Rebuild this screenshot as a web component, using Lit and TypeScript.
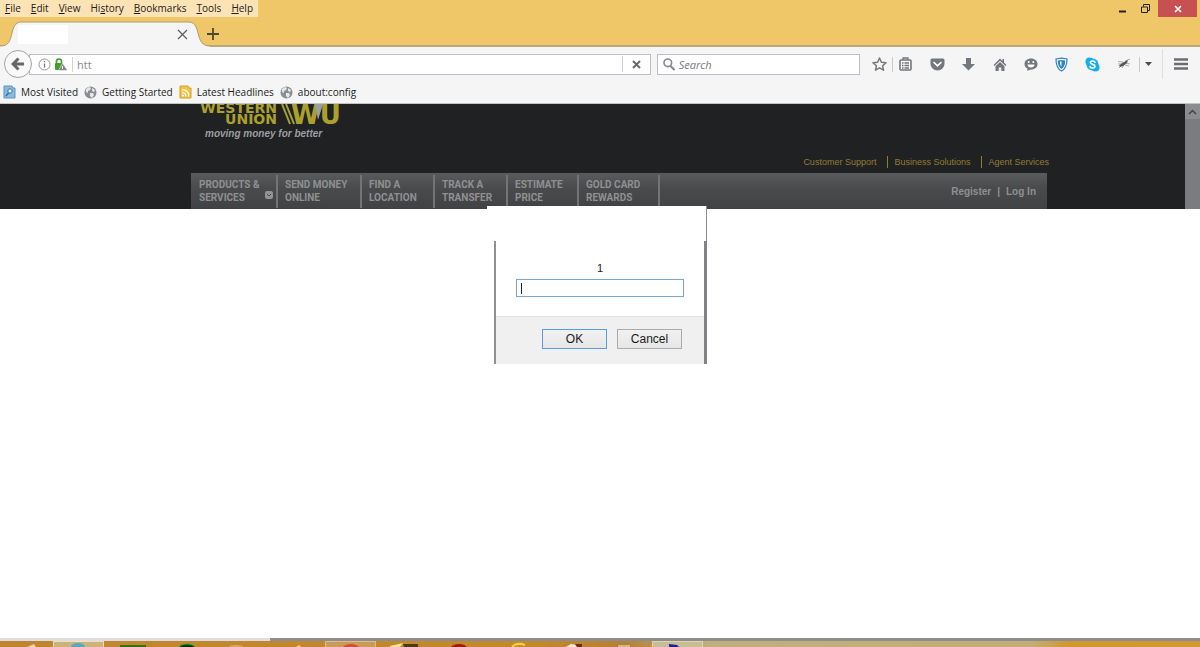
import { LitElement, html, svg, css } from "lit";
import { customElement } from "lit/decorators.js";

const icon = (w: number, h: number, body: unknown) => html`
  <svg width=${w} height=${h} viewBox="0 0 ${w} ${h}" fill="none" aria-hidden="true">${body}</svg>`;

const cross = (size: number, color: string, stroke: number) =>
  icon(size, size, svg`<path d="M1 1L${size - 1} ${size - 1}M${size - 1} 1L1 ${size - 1}" stroke=${color} stroke-width=${stroke}/>`);

const globe = () => icon(13, 13, svg`
  <circle cx="6.5" cy="6.5" r="6" fill="#8b8e92"/>
  <path d="M2 3l3-2 2 1-1 2-2 1v2l-2-1zM8 2l3 2-1 2-2-1zM6 7l3 0 1 2-2 3-2-2z" fill="#e6e7e9"/>`);

const star = () => icon(15, 14, svg`
  <path d="M7.500 1l1.900 4.200 4.600.5-3.400 3.100.9 4.400-4-2.300-4 2.300.9-4.400L1 5.700l4.600-.5z" stroke="#74777c" stroke-width="1.500" stroke-linejoin="round"/>`);

const list = () => icon(13, 14, svg`
  <rect x="1" y="3" width="11" height="10" rx="1" stroke="#74777c" stroke-width="1.600"/>
  <path d="M4 3V1h5v2M3 6h1.500M5.500 6H10M3 8.500h1.500M5.500 8.500H10M3 11h1.500M5.500 11H10" stroke="#74777c" stroke-width="1.300"/>`);

const pocket = () => icon(15, 13, svg`
  <path d="M2 .5h11q1.500 0 1.500 1.500v4a7 6.500 0 0 1-14 0V2Q.5.5 2 .5z" fill="#74777c"/>
  <path d="M4 4.500l3.500 3.300L11 4.500" stroke="#fff" stroke-width="1.700" stroke-linecap="round"/>`);

const download = () => icon(13, 13, svg`<path d="M4 0h5v6h4L6.500 12.500 0 6h4z" fill="#74777c"/>`);

const home = () => icon(14, 13, svg`
  <path d="M7 .5L.5 7 1.500 8 7 2.700 12.500 8l1-1L11 4.500V1H9.500v2z" fill="#74777c"/>
  <path d="M7 4L2.500 8.300V13h3.200V9.500h2.600V13h3.200V8.300z" fill="#74777c"/>`);

const smile = () => icon(14, 13, svg`
  <path d="M7 .5c3.800 0 6.500 2.300 6.500 5.500S10.800 11.500 7 11.500L3 12.700l.5-2C1.500 9.700.5 8 .5 6 .5 2.800 3.200.5 7 .5z" fill="#74777c"/>
  <path d="M3.500 6.500h7c0 4-7 4-7 0z" fill="#fff"/>
  <circle cx="4.700" cy="4" r="1" fill="#fff"/><circle cx="9.300" cy="4" r="1" fill="#fff"/>`);

const shield = () => icon(13, 15, svg`
  <path d="M6.500 1.200L12 2C12 8 10.500 12 6.500 14 2.500 12 1 8 1 2z" fill="#fff" stroke="#2e86bd" stroke-width="1.200"/>
  <path d="M6.500 3l3.800.5c0 4-1 6.600-3.800 8.500C3.700 10.100 2.700 7.500 2.700 3.500z" fill="#2e86bd"/>
  <path d="M5 4.500h1.500v5C5.300 8.500 5 6.500 5 4.500z" fill="#fff"/>`);

const skype = () => icon(15, 15, svg`
  <circle cx="7.500" cy="7.500" r="6" fill="#10aeef"/>
  <circle cx="4.500" cy="4.500" r="4" fill="#10aeef"/><circle cx="10.500" cy="10.500" r="4" fill="#10aeef"/>
  <path d="M10 5.300C9.500 3.500 5.300 3.600 5.300 5.600c0 2.300 4.700 1.300 4.700 3.700 0 2.200-4.500 2.300-5 .2" stroke="#fff" stroke-width="1.700" stroke-linecap="round"/>`);

const bug = () => icon(14, 12, svg`
  <path d="M1 3.500l5 .5M2 10l3-3M5 10l2-3M8 7l4 1M9 5l4 1M8 3l5-2M1 6h4" stroke="#a0a2a5" stroke-width=".9"/>
  <path d="M2 7.500l4-3 5-2.500-1 3-4 3-3 1z" fill="#54565a"/>`);

const NAV: Array<[string, string, number]> = [
  ["PRODUCTS &", "SERVICES", 86],
  ["SEND MONEY", "ONLINE", 84],
  ["FIND A", "LOCATION", 73],
  ["TRACK A", "TRANSFER", 73],
  ["ESTIMATE", "PRICE", 71],
  ["GOLD CARD", "REWARDS", 81],
];

@customElement("browser-chrome")
class BrowserChrome extends LitElement {
  static styles = css`
    :host { display: block; font: 10px/17px "Open Sans", "Noto Sans", sans-serif; color: #1c1c1c; }
    button { border: 0; padding: 0; background: none; font: inherit; color: inherit; display: flex; align-items: center; justify-content: center; }
    svg { display: block; flex: none; }
    u { text-underline-offset: 1px; }
    .title { background: #efc768; height: 47px; box-sizing: border-box; border-bottom: 2px solid #b6a77c; }
    .top { display: flex; justify-content: space-between; height: 17px; }
    .menu { display: flex; gap: 10px; padding: 0 5px; background: #fbe3b6; }
    .win { display: flex; }
    .win button { width: 23px; height: 17px; }
    .win .close { width: 39px; background: #c75050; margin: 0 3px 0 1px; }
    .tabs { display: flex; padding-top: 4px; height: 26px; }
    .tab { position: relative; width: 205px; height: 26px; }
    .tabshape { position: absolute; left: 0; top: 0; }
    .tabbody { position: relative; display: flex; align-items: center; justify-content: space-between; height: 26px; padding: 0 17px 0 18px; }
    .blank { width: 50px; height: 19px; background: #fff; }
    .new { width: 16px; height: 26px; }
    .tools { display: flex; align-items: center; background: #f5f5f5; height: 34px; padding-left: 4px; }
    .back { position: relative; z-index: 1; width: 28px; height: 28px; box-sizing: border-box; border: 1px solid #a5a5a9; border-radius: 50%; background: #f9f9f9; }
    .field { display: flex; align-items: center; box-sizing: border-box; height: 21px; border: 1px solid #bdbdc5; background: #fff; }
    .url { flex: 623 1 0; margin-left: -3px; padding-left: 8px; }
    .search { flex: 200 1 0; margin: 0 11px 0 6px; padding-left: 5px; gap: 4px; min-width: 0; }
    .field input { border: 0; outline: 0; padding: 0; min-width: 0; flex: 1; background: none; font: inherit; font-size: 11px; height: 17px; color: #8a8a8a; }
    .search input { font-style: italic; }
    .search input::placeholder { color: #77797c; opacity: 1; }
    .ids { display: flex; align-items: center; gap: 3px; padding-right: 4px; border-right: 1px solid #d4d4d4; margin-right: 4px; height: 15px; }
    .stop { width: 28px; height: 16px; border-left: 1px solid #cfcfcf; }
    .icons { display: flex; align-items: center; }
    .icons button { width: 31px; height: 22px; }
    .icons .narrow { width: 16px; }
    .icons .tight { width: 24px; margin-right: 5px; }
    .icons .menuButton { width: 38px; margin-left: 6px; padding-right: 2px; border-left: 1px solid #dedede; height: 30px; }
    .line { width: 1px; height: 15px; background: #c9c9c9; }
    .narrow + .line { margin-left: 5px; }
    .marks { display: flex; gap: 6px; background: #f5f5f5; height: 23px; padding: 0 3px; box-sizing: border-box; border-bottom: 1px solid #c3c3c3; }
    .marks a { display: flex; align-items: center; gap: 5px; color: inherit; text-decoration: none; white-space: nowrap; }
  `;

  render() {
    return html`
      <div class="title">
        <div class="top">
          <nav class="menu" aria-label="Menu">
            <span><u>F</u>ile</span><span><u>E</u>dit</span><span><u>V</u>iew</span><span>Hi<u>s</u>tory</span>
            <span><u>B</u>ookmarks</span><span><u>T</u>ools</span><span><u>H</u>elp</span>
          </nav>
          <div class="win">
            <button aria-label="Minimise">${icon(9, 9, svg`<path d="M1 7.500h7" stroke="#222" stroke-width="2"/>`)}</button>
            <button aria-label="Restore">${icon(9, 9, svg`<path d="M.5 3h6v5.500h-6zM2.500 2.500v-2h6v6h-2" stroke="#222" stroke-width="1"/>`)}</button>
            <button class="close" aria-label="Close">${cross(8, "#fff", 1.6)}</button>
          </div>
        </div>
        <div class="tabs">
          <div class="tab">
            <svg class="tabshape" width="212" height="26" viewBox="0 0 212 26" aria-hidden="true">
              <path d="M0 25C9 25 10 20 12 12 14 3 17 1 22 1H188c6 0 8 3 10 11 2 8 4 13 12 13v1H0z" fill="#f5f5f5"/>
              <path d="M0 25C9 25 10 20 12 12 14 3 17 1 22 1H188c6 0 8 3 10 11 2 8 4 13 12 13" fill="none" stroke="#ae9c6c"/>
            </svg>
            <div class="tabbody"><span class="blank"></span><button aria-label="Close tab">${cross(11, "#5c5c5c", 1.2)}</button></div>
          </div>
          <button class="new" aria-label="New tab">${icon(12, 12, svg`<path d="M6 0v12M0 6h12" stroke="#4d4637" stroke-width="1.800"/>`)}</button>
        </div>
      </div>
      <div class="tools">
        <button class="back" aria-label="Back">${icon(14, 14, svg`<path d="M7.500 1.500L2 7l5.500 5.500M2.500 7H13" stroke="#65676b" stroke-width="3"/>`)}</button>
        <div class="field url">
          <span class="ids">
            ${icon(13, 13, svg`<circle cx="6.500" cy="6.500" r="5.500" stroke="#98989c"/><path d="M6.500 5.500v4M6.500 3v1.300" stroke="#77797c" stroke-width="1.300"/>`)}
            ${icon(14, 13, svg`<path d="M2.500 6V3.500a2.500 2.500 0 0 1 5 0V6" stroke="#459b2c" stroke-width="1.600"/>
              <rect x="1" y="5" width="8" height="7" rx="1" fill="#459b2c"/><path d="M8.500 5l5 7.500h-9z" fill="#85888b" stroke="#fff" stroke-width=".5"/><path d="M8.500 8v3" stroke="#fff"/>`)}
          </span>
          <input type="text" aria-label="Address" value="htt">
          <button class="stop" aria-label="Stop">${cross(9, "#67696d", 2)}</button>
        </div>
        <div class="field search">
          ${icon(12, 13, svg`<circle cx="4.800" cy="4.800" r="3.800" stroke="#85878b" stroke-width="1.600"/><path d="M7.500 8l4 4" stroke="#85878b" stroke-width="2"/>`)}
          <input type="text" aria-label="Search" placeholder="Search">
        </div>
        <div class="icons">
          <button class="narrow" aria-label="Bookmark">${star()}</button>
          <span class="line"></span>
          <button class="tight" aria-label="Bookmarks list">${list()}</button>
          <button aria-label="Pocket">${pocket()}</button>
          <button aria-label="Downloads">${download()}</button>
          <button aria-label="Home">${home()}</button>
          <button aria-label="Hello">${smile()}</button>
          <button aria-label="Shield">${shield()}</button>
          <button aria-label="Skype">${skype()}</button>
          <button aria-label="Inspector">${bug()}</button>
          <span class="line"></span>
          <button class="narrow" aria-label="More">${icon(7, 4, svg`<path d="M0 0h7L3.500 4z" fill="#4b4d50"/>`)}</button>
          <button class="menuButton" aria-label="Open menu">${icon(14, 12, svg`<path d="M0 1.500h14M0 6h14M0 10.500h14" stroke="#6b6d71" stroke-width="2.400"/>`)}</button>
        </div>
      </div>
      <nav class="marks" aria-label="Bookmarks">
        <a href="#">${icon(13, 14, svg`<path d="M1 1h8l1 2h2v10H1z" fill="#8bb9df" stroke="#5b93c3"/><circle cx="7" cy="6" r="2.200" fill="#e8f4fd" stroke="#2f75ac"/><path d="M5.500 8L3 11" stroke="#2f75ac" stroke-width="1.500"/>`)}Most Visited</a>
        <a href="#">${globe()}Getting Started</a>
        <a href="#">${icon(13, 14, svg`<path d="M1 1h8l1 2h2v10H1z" fill="#f1c445" stroke="#d0a12a"/><circle cx="4" cy="10.500" r="1" fill="#fff"/><path d="M3 7.500q3.500 0 4 4M3 4.700q6.500.3 7 6.800" stroke="#fff" stroke-width="1.200"/>`)}Latest Headlines</a>
        <a href="#">${globe()}about:config</a>
      </nav>`;
  }
}

@customElement("site-header")
class SiteHeader extends LitElement {
  static styles = css`
    :host { display: flex; height: 105px; background: #202123; font-family: "Liberation Sans", Arial, sans-serif; overflow: hidden; }
    .main { flex: 1; display: flex; flex-direction: column; justify-content: space-between; padding: 0 138px 0 191px; }
    .upper { display: flex; justify-content: space-between; height: 70px; }
    .logo { display: block; margin-left: -3px; }
    .word { font: bold 14px "DejaVu Sans", sans-serif; fill: #aca02c; }
    .mono { font: bold 26px "DejaVu Sans", sans-serif; fill: #aca02c; }
    .tag { font: italic bold 10px "Liberation Sans", Arial, sans-serif; fill: #9c9d9f; }
    .support { display: flex; align-items: flex-end; padding-bottom: 5px; margin-right: -2px; font-size: 9px; line-height: 12px; white-space: nowrap; }
    .support a { color: #937c30; text-decoration: none; }
    .support a + a { border-left: 1px solid #937c30; margin-left: 11px; padding-left: 6px; }
    .bar { display: flex; height: 36px; background: linear-gradient(#5a5b5d, #4a4b4d 40%, #414244); justify-content: space-between; }
    .items { display: flex; padding: 2px 0 0 1px; font: bold 10px/13px Roboto, Arial, sans-serif; }
    .items a { position: relative; box-sizing: border-box; border-right: 2px solid #737476; color: #8f9092; text-decoration: none; padding: 3px 0 0 7px; height: 33px; white-space: nowrap; }
    .drop { position: absolute; right: 3px; bottom: 9px; }
    .account { display: flex; gap: 6px; padding: 12px 11px 0 0; font: bold 10px/14px "Liberation Sans", Arial, sans-serif; color: #8f9092; }
    .account a { color: inherit; text-decoration: none; }
    .scroll { width: 15px; background: #7b7c7f; }
    .scroll button { width: 15px; height: 15px; border: 0; padding: 0; background: #8b8c8f; display: flex; align-items: center; justify-content: center; }
  `;

  render() {
    return html`
      <div class="main">
        <div class="upper">
          <svg class="logo" width="170" height="40" viewBox="0 0 170 40" role="img" aria-label="Western Union logo">
            <text class="word" x="89" y="9" text-anchor="end">WESTERN</text>
            <text class="word" x="89" y="20" text-anchor="end">UNION</text>
            <path d="M94 0l8 20M98 0l8 20" stroke="#aca02c" stroke-width="2"/>
            <text class="mono" x="103" y="20">WU</text>
            <path d="M127 0h8l-5 16z" fill="#9d9ea1"/>
            <text class="tag" x="17" y="33">moving money for better</text>
          </svg>
          <nav class="support" aria-label="Support">
            <a href="#">Customer Support</a><a href="#">Business Solutions</a><a href="#">Agent Services</a>
          </nav>
        </div>
        <div class="bar">
          <nav class="items" aria-label="Services">
            ${NAV.map(([a, b, w], i) => html`<a href="#" style="width:${w}px">${a}<br>${b}${i === 0
              ? html`<svg class="drop" width="8" height="8" viewBox="0 0 8 8" aria-hidden="true"><rect width="8" height="8" rx="2" fill="#929395"/><path d="M2 3l2 2 2-2" fill="none" stroke="#4c4d4f"/></svg>` : ""}</a>`)}
          </nav>
          <div class="account"><a href="#">Register</a><span>|</span><a href="#">Log In</a></div>
        </div>
      </div>
      <div class="scroll"><button aria-label="Scroll up">${icon(9, 6, svg`<path d="M1 5l3.500-3.500L8 5" stroke="#434447" stroke-width="1.500"/>`)}</button></div>`;
  }
}

@customElement("prompt-dialog")
class PromptDialog extends LitElement {
  static styles = css`
    :host { display: block; width: 220px; font: 12px/14px "Liberation Sans", Arial, sans-serif; color: #1a1a1a; }
    .head { height: 35px; box-sizing: border-box; background: #fff; border-right: 1px solid #8a8c8f; }
    .body { margin-left: 7px; border-left: 2px solid #8e9093; border-right: 3px solid #818487; background: #fff; }
    .ask { display: flex; flex-direction: column; align-items: center; gap: 4px; padding: 20px 20px 19px; }
    label { font-size: 11px; }
    input { box-sizing: border-box; width: 100%; height: 18px; border: 1px solid #7ba7ca; padding: 0 4px; outline: 0; font: inherit; background: linear-gradient(#222, #222) 4px 3px / 1px 11px no-repeat #fff; }
    .actions { display: flex; justify-content: flex-end; gap: 10px; background: #f0f0f0; border-top: 1px solid #e2e2e2; padding: 12px 22px 15px 0; }
    button { box-sizing: border-box; width: 65px; height: 20px; padding: 0 0 1px; border: 1px solid #acacac; background: linear-gradient(#f1f1f1, #e6e6e6); font: inherit; color: inherit; }
    .ok { border-color: #569de5; }
  `;

  render() {
    return html`
      <div class="head"></div>
      <div class="body">
        <div class="ask"><label for="answer">1</label><input id="answer" type="text"></div>
        <div class="actions"><button class="ok">OK</button><button>Cancel</button></div>
      </div>`;
  }
}

@customElement("task-bar")
class TaskBar extends LitElement {
  static styles = css`
    :host { display: block; }
    .track { height: 3px; background: linear-gradient(90deg, #dedede 270px, #8b8d90 270px); }
    .bar { height: 6px; overflow: hidden; background: linear-gradient(90deg, #c08530 0, #c4882c 45%, #b58035 52%, #c2ae7c 59%, #c5ac76 86%, #cf9830 89%, #cf9a33 100%); }
    svg { display: block; }
  `;

  render() {
    return html`
      <div class="track"></div>
      <div class="bar">
        <svg width="720" height="6" viewBox="0 0 720 6" aria-hidden="true">
          <path d="M27 6l7-3 2 3z" fill="#ead6a8"/>
          <rect x="53.500" y=".5" width="50" height="7" fill="#cdb27c" stroke="#eee0bd"/>
          <ellipse cx="78" cy="6" rx="7" ry="4" fill="#58a8bd"/>
          <rect x="120" y="4" width="26" height="2" fill="#2e720b"/>
          <ellipse cx="187" cy="7" rx="8" ry="4" fill="#06340b" stroke="#35ac30"/>
          <ellipse cx="236" cy="6" rx="7" ry="2" fill="#dba864"/>
          <path d="M296 6l3-2 2 2z" fill="#f4d29a"/>
          <rect x="325.500" y=".5" width="50" height="7" fill="#c99a5a" stroke="#e1bd80"/>
          <ellipse cx="351" cy="7" rx="8" ry="4" fill="#cf503a"/>
          <path d="M390 5l13-3-3 4h-10z" fill="#fae697"/><path d="M403 3h15v3h-14z" fill="#503817"/>
          <ellipse cx="459" cy="7" rx="8" ry="4" fill="#a41810"/>
          <path d="M512 6q5-5 13-2" fill="none" stroke="#f7cf45" stroke-width="2"/>
          <path d="M566 6l5-3 6 1 5 2z" fill="#f5e9dc"/><path d="M575 3h7v3h-5z" fill="#6c2e15"/>
          <path d="M618 4h12v2h-12z" fill="#c9b78e"/>
          <rect x="652.500" y=".5" width="50" height="7" fill="#c9bb94" stroke="#e2d6b2"/>
          <path d="M669 3l8 1 2 2h-10z" fill="#1c2299"/>
        </svg>
      </div>`;
  }
}

@customElement("app-root")
class AppRoot extends LitElement {
  static styles = css`
    :host { display: flex; flex-direction: column; min-height: 100vh; background: #fff; }
    .page { position: relative; flex: 1; }
    .dialog { position: absolute; top: 102px; left: calc(50% - 113px); }
  `;

  render() {
    return html`
      <browser-chrome></browser-chrome>
      <main class="page">
        <site-header></site-header>
        <prompt-dialog class="dialog" role="dialog" aria-label="Prompt"></prompt-dialog>
      </main>
      <task-bar></task-bar>`;
  }
}
